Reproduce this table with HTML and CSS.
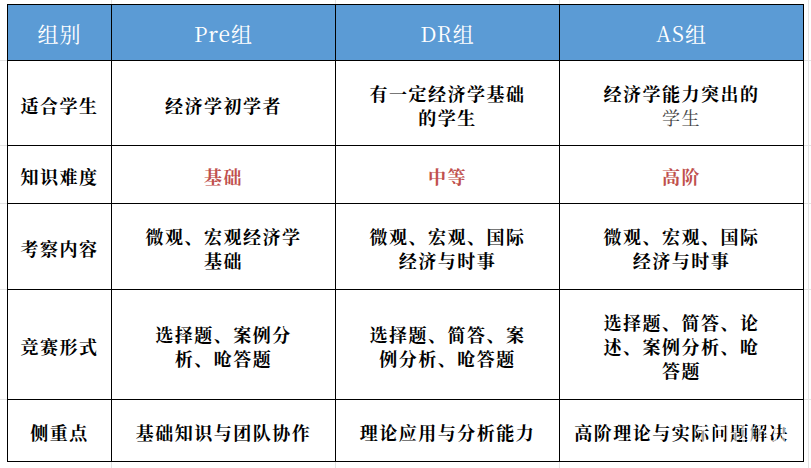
FILE: index.html
```html
<!DOCTYPE html>
<html lang="zh-CN">
<head>
<meta charset="utf-8">
<title>组别对比</title>
<link rel="stylesheet" href="styles.css">
</head>
<body>
<div class="sheet">
  <div class="grid">
    <div class="cell head"><div>组别</div></div>
    <div class="cell head"><div>Pre组</div></div>
    <div class="cell head"><div>DR组</div></div>
    <div class="cell head"><div>AS组</div></div>

    <div class="cell"><div>适合学生</div></div>
    <div class="cell"><div>经济学初学者</div></div>
    <div class="cell"><div>有一定经济学基础<br>的学生</div></div>
    <div class="cell"><div>经济学能力突出的<br><span class="soft">学生</span></div></div>

    <div class="cell"><div>知识难度</div></div>
    <div class="cell red"><div>基础</div></div>
    <div class="cell red"><div>中等</div></div>
    <div class="cell red"><div>高阶</div></div>

    <div class="cell"><div>考察内容</div></div>
    <div class="cell"><div>微观、宏观经济学<br>基础</div></div>
    <div class="cell"><div>微观、宏观、国际<br>经济与时事</div></div>
    <div class="cell"><div>微观、宏观、国际<br>经济与时事</div></div>

    <div class="cell"><div>竞赛形式</div></div>
    <div class="cell"><div>选择题、案例分<br>析、呛答题</div></div>
    <div class="cell"><div>选择题、简答、案<br>例分析、呛答题</div></div>
    <div class="cell"><div>选择题、简答、论<br>述、案例分析、呛<br>答题</div></div>

    <div class="cell"><div>侧重点</div></div>
    <div class="cell"><div>基础知识与团队协作</div></div>
    <div class="cell"><div>理论应用与分析能力</div></div>
    <div class="cell last"><div>高阶理论与实际问题解决</div><span class="mark"></span></div>
  </div>
</div>
</body>
</html>
```

FILE: styles.css
```css
html, body {
  margin: 0;
  padding: 0;
}

body {
  width: 811px;
  height: 468px;
  overflow: hidden;
  background-color: #ffffff;
  background-image:
    linear-gradient(to right, transparent 111px, #e3e3e3 111px, #e3e3e3 112px, transparent 112px),
    linear-gradient(to right, transparent 335px, #e3e3e3 335px, #e3e3e3 336px, transparent 336px),
    linear-gradient(to right, transparent 559px, #e3e3e3 559px, #e3e3e3 560px, transparent 560px),
    linear-gradient(to right, transparent 808px, #e3e3e3 808px, #e3e3e3 809px, transparent 809px),
    linear-gradient(to bottom, transparent 60px, #e3e3e3 60px, #e3e3e3 61px, transparent 61px),
    linear-gradient(to bottom, transparent 145px, #e3e3e3 145px, #e3e3e3 146px, transparent 146px),
    linear-gradient(to bottom, transparent 203px, #e3e3e3 203px, #e3e3e3 204px, transparent 204px),
    linear-gradient(to bottom, transparent 289px, #e3e3e3 289px, #e3e3e3 290px, transparent 290px),
    linear-gradient(to bottom, transparent 399px, #e3e3e3 399px, #e3e3e3 400px, transparent 400px);
  font-family: "Noto Serif CJK SC", "Liberation Serif", "Noto Sans CJK SC", serif;
}

.sheet {
  padding: 4px 0 0 7px;
}

.grid {
  display: grid;
  grid-template-columns: 103px 223px 223px 243px;
  grid-template-rows: 55px 84px 57px 85px 109px 61px;
  gap: 1px;
  padding: 1px;
  width: max-content;
  background: #000000;
}

.cell {
  display: flex;
  align-items: center;
  justify-content: center;
  text-align: center;
  background: #ffffff;
  color: #000000;
  font-size: 18px;
  font-weight: 700;
  line-height: 24px;
  letter-spacing: 1.5px;
  padding-top: 3px;
  box-sizing: border-box;
}

.cell.head {
  background: #5b9bd5;
  color: #ffffff;
  font-size: 21px;
  font-weight: 400;
  letter-spacing: 1px;
  padding-top: 0;
}

.cell.red {
  color: #c0504d;
}

.soft {
  font-weight: 400;
  color: #444444;
}

.cell.last {
  position: relative;
}

.mark {
  position: absolute;
  left: 142px;
  top: 20px;
  width: 92px;
  height: 24px;
  background: repeating-linear-gradient(90deg, rgba(255,255,255,0.6) 0 3px, transparent 3px 8px);
}
```
